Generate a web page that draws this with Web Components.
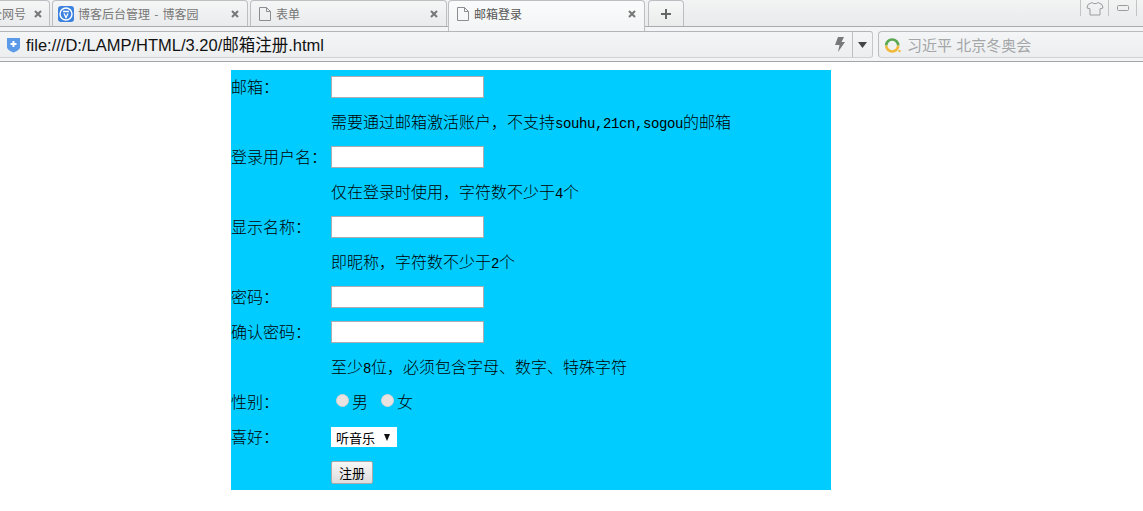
<!DOCTYPE html>
<html lang="zh">
<head>
<meta charset="utf-8">
<title>邮箱登录</title>
<style>
  html, body { margin: 0; padding: 0; background: #fff; overflow: hidden; }
  body { font-family: "Noto Sans CJK SC", "Liberation Sans", sans-serif; }
</style>
</head>
<body>

<browser-chrome>
  <browser-tab slot="tabs" width="69" first>全网号</browser-tab>
  <browser-tab slot="tabs" width="196" icon="site">博客后台管理 - 博客园</browser-tab>
  <browser-tab slot="tabs" width="197" icon="page">表单</browser-tab>
  <browser-tab slot="tabs" width="197" icon="page" active>邮箱登录</browser-tab>
</browser-chrome>

<register-form>
  <form-row label="邮箱："><text-box></text-box></form-row>
  <form-row>需要通过邮箱激活账户，不支持<latin-text>souhu,21cn,sogou</latin-text>的邮箱</form-row>
  <form-row label="登录用户名："><text-box></text-box></form-row>
  <form-row>仅在登录时使用，字符数不少于<latin-text>4</latin-text>个</form-row>
  <form-row label="显示名称："><text-box></text-box></form-row>
  <form-row>即昵称，字符数不少于<latin-text>2</latin-text>个</form-row>
  <form-row label="密码："><text-box></text-box></form-row>
  <form-row label="确认密码："><text-box></text-box></form-row>
  <form-row>至少<latin-text>8</latin-text>位，必须包含字母、数字、特殊字符</form-row>
  <form-row label="性别："><radio-option>男</radio-option><radio-option>女</radio-option></form-row>
  <form-row label="喜好："><choice-box>听音乐</choice-box></form-row>
  <form-row><submit-button>注册</submit-button></form-row>
</register-form>

<script>
// small helper, every element below just sets its shadow html once
class BaseElement extends HTMLElement {
  connectedCallback() {
    if (!this.shadowRoot) {
      this.attachShadow({ mode: 'open' });
      this.shadowRoot.innerHTML = this.render();
    }
  }
}

class BrowserChrome extends BaseElement {
  render() {
    return `
      <style>
        :host { display: block; height: 62px; box-sizing: border-box; border-bottom: 1px solid #a4a7aa;
                background: #f3f4f5; font-family: "Noto Sans CJK SC", "Liberation Sans", sans-serif; }
        .strip { height: 27px; box-sizing: border-box; border-bottom: 1px solid #a9acaf; display: flex;
                 background: linear-gradient(#f2f3f3, #e9ebec); }
        .tabs { display: flex; width: 645px; gap: 2px; flex: none; }
        .plus { width: 36px; height: 26px; margin-left: 3px; box-sizing: border-box; flex: none;
                border: 1px solid #bcbfc2; border-bottom: 0; border-radius: 4px 4px 0 0;
                background: linear-gradient(#f6f7f7, #eaecec); display: flex; align-items: center; justify-content: center; }
        .sys { margin-left: auto; display: flex; height: 16px; }
        .sys div { width: 27px; border-left: 1px solid #c2c4c6; display: flex; align-items: center; justify-content: center; }
        .sys div:last-child { width: 6px; }
        .bar { height: 34px; box-sizing: border-box; padding-top: 4px; display: flex; }
        .addr { width: 873px; height: 27px; box-sizing: border-box; border-top: 1px solid #b3b6b9; border-bottom: 1px solid #cfd1d3;
                border-right: 1px solid #c4c6c8; border-radius: 0 3px 3px 0; background: linear-gradient(#f4f5f6, #eceef0);
                display: flex; align-items: center; padding-left: 6px; font: 16.5px/24px "Liberation Sans", "Noto Sans CJK SC", sans-serif; color: #111; }
        .addr .url { margin-left: 5px; flex: 1; white-space: nowrap; }
        .addr .bolt { margin-right: 7px; display: flex; }
        .addr .drop { width: 19px; height: 25px; border-left: 1px solid #bdbfc1; display: flex; align-items: center; justify-content: center; }
        .search { margin-left: 5px; flex: 1; height: 27px; box-sizing: border-box; border: 1px solid #b9bcbf; border-right: 0;
                  border-bottom-color: #cfd1d3; border-radius: 4px 0 0 4px; background: linear-gradient(#f4f5f6, #eceef0);
                  display: flex; align-items: center; padding-left: 5px; color: #a4a6a8; font-size: 15px; word-spacing: 1px; white-space: nowrap; }
        .search span { margin-left: 6px; }
      </style>
      <div class="strip">
        <div class="tabs"><slot name="tabs"></slot></div>
        <div class="plus">
          <svg width="12" height="12" viewBox="0 0 12 12"><path d="M6 1v10M1 6h10" stroke="#666" stroke-width="2"/></svg>
        </div>
        <div class="sys">
          <div>
            <svg width="18" height="15" viewBox="0 0 18 15" fill="none" stroke="#9a9c9e" stroke-width="1"><path d="M6 1.500 2 3.500 1 7l3 .8V14h10V7.800L17 7l-1-3.500-4-2c-.8 1.500-5.200 1.500-6 0Z"/></svg>
          </div>
          <div>
            <svg width="12" height="6" viewBox="0 0 12 6"><rect x=".5" y=".5" width="11" height="5" rx="1" fill="none" stroke="#9a9c9e"/></svg>
          </div>
          <div></div>
        </div>
      </div>
      <div class="bar">
        <div class="addr">
          <svg width="15" height="16" viewBox="0 0 15 16"><path d="M1 1h13v9c0 2.500-3.500 4.500-6.500 5.500C4.500 14.500 1 12.500 1 10Z" fill="#5a9ae8"/><path d="M7.500 4v6M4.500 7h6" stroke="#fff" stroke-width="2"/></svg>
          <span class="url">file:///D:/LAMP/HTML/3.20/邮箱注册.html</span>
          <span class="bolt"><svg width="10" height="15" viewBox="0 0 10 15"><path d="M3 0h6L6.500 5H10L3 15l1.500-7H0Z" fill="#77797b"/></svg></span>
          <span class="drop"><svg width="9" height="6" viewBox="0 0 9 6"><path d="M0 0h9L4.500 6Z" fill="#444"/></svg></span>
        </div>
        <div class="search">
          <svg width="17" height="17" viewBox="0 0 17 17" fill="none" stroke-width="2.600">
            <path d="M2.200 9.500A6 6 0 0 1 14.200 9.500" stroke="#5aa84f"/>
            <path d="M14.200 9.500A6 6 0 0 1 2.200 9.500" stroke="#f0b93a"/>
            <circle cx="15.500" cy="15" r="1.200" fill="#f0b93a" stroke="none"/>
          </svg>
          <span>习近平 北京冬奥会</span>
        </div>
      </div>`;
  }
}

class BrowserTab extends BaseElement {
  render() {
    const width = this.getAttribute('width');
    const icon = this.getAttribute('icon');
    const active = this.hasAttribute('active');
    const first = this.hasAttribute('first');
    let glyph = '';
    if (icon === 'site') {
      glyph = `<svg width="16" height="16" viewBox="0 0 16 16"><rect width="16" height="16" rx="3" fill="#3c82de"/><circle cx="8" cy="8" r="6" fill="none" stroke="#fff" stroke-width="1.400"/><path d="M5 5.500h6M6 7.500 8 11.500 10 7.500" fill="none" stroke="#fff" stroke-width="1.300"/></svg>`;
    } else if (icon === 'page') {
      glyph = `<svg width="12" height="14" viewBox="0 0 12 14" fill="none" stroke="#8b8d8f"><path d="M.5.500h7l4 4v9H.5ZM7.500.500v4h4"/></svg>`;
    }
    // the first tab is scrolled partly out of the strip, the active one sits over the next bar
    return `
      <style>
        :host { display: block; flex: none; width: ${width}px; height: ${active ? 31 : 26}px; box-sizing: border-box;
                position: relative; z-index: ${active ? 1 : 0};
                margin-left: ${first ? -19 : active ? -1 : 0}px;
                border: 1px solid #bcbfc2; border-bottom: 0; border-radius: 4px 4px 0 0;
                background: ${active ? 'linear-gradient(#fafbfb, #f3f4f5)' : 'linear-gradient(#f5f6f6, #e9ebec)'};
                font-size: 12px; word-spacing: 1.500px; color: ${active ? '#555' : '#777'}; }
        .in { height: 25px; display: flex; align-items: center; padding: 0 8px 0 ${icon === 'site' ? 5 : 8}px;
              justify-content: space-between; overflow: hidden; white-space: nowrap; }
        .lbl { display: flex; align-items: center; gap: ${icon === 'site' ? 4 : 5}px; }
        .x { flex: none; display: flex; margin-left: 8px; }
      </style>
      <div class="in">
        <span class="lbl">${glyph}<slot></slot></span>
        <span class="x"><svg width="8" height="8" viewBox="0 0 8 8"><path d="m1 1 6 6M7 1 1 7" stroke="#777" stroke-width="2"/></svg></span>
      </div>`;
  }
}

class RegisterForm extends BaseElement {
  render() {
    return `
      <style>
        :host { display: block; width: 600px; margin: 8px 0 0 231px; background: #00ccff; color: #000;
                font: 300 16px "Noto Sans CJK SC", "Liberation Serif", serif; }
      </style>
      <slot></slot>`;
  }
}

class FormRow extends BaseElement {
  render() {
    return `
      <style>
        :host { display: grid; grid-template-columns: 100px 500px; height: 35px; box-sizing: border-box; padding-bottom: 4px;
                align-items: center; white-space: nowrap; }
        .cell { display: flex; align-items: center; }
        .cell span { display: flex; align-items: baseline; }
      </style>
      <div>${this.getAttribute('label') || ''}</div>
      <div class="cell"><span><slot></slot></span></div>`;
  }
}

class LatinText extends BaseElement {
  render() {
    return `<style>:host { font: 14px "Liberation Mono", monospace; letter-spacing: -.4px; }</style><slot></slot>`;
  }
}

class TextBox extends BaseElement {
  render() {
    return `
      <style>
        :host { display: block; margin-top: 3px; }
        input { display: block; width: 153px; height: 22px; box-sizing: border-box; margin: 0; background: #fff;
                border: 1px solid #abadb3; border-radius: 0; padding: 1px; }
      </style>
      <input type="text">`;
  }
}

class RadioOption extends BaseElement {
  render() {
    return `
      <style>
        :host { display: inline-flex; align-items: center; margin-right: 8px; margin-top: 1px; }
        input { appearance: none; width: 13px; height: 13px; margin: 2px 3px 4px 5px; border-radius: 50%;
                border: 1px solid #d6d4d4; box-sizing: border-box; background: #e8e2e0; }
      </style>
      <input type="radio" name="sex"><slot></slot>`;
  }
}

class ChoiceBox extends BaseElement {
  render() {
    return `
      <style>
        :host { display: block; position: relative; width: 66px; height: 20px; margin-top: 3px; }
        select { appearance: none; display: block; width: 66px; height: 20px; box-sizing: border-box; border: 0; margin: 0; padding: 0 0 0 5px;
                 background: #fff; color: #000; font: 13px "Noto Sans CJK SC", sans-serif; border-radius: 0; }
        .arrow { position: absolute; left: 53px; top: 7px; width: 0; height: 0; border-style: solid;
                 border-width: 7px 3.500px 0; border-color: #111 transparent transparent; }
      </style>
      <select><option>${this.textContent.trim()}</option></select>
      <div class="arrow"></div>`;
  }
}

class SubmitButton extends BaseElement {
  render() {
    return `
      <style>
        :host { display: block; margin-top: 4px; }
        button { display: block; width: 42px; height: 23px; box-sizing: border-box; margin: 0; padding: 0; border: 1px solid #a9a9a9;
                 border-radius: 2px; background: linear-gradient(#f7f7f7, #dddddd); color: #000;
                 font: 13px "Noto Sans CJK SC", sans-serif; }
      </style>
      <button type="submit"><slot></slot></button>`;
  }
}

customElements.define('browser-chrome', BrowserChrome);
customElements.define('browser-tab', BrowserTab);
customElements.define('register-form', RegisterForm);
customElements.define('form-row', FormRow);
customElements.define('latin-text', LatinText);
customElements.define('text-box', TextBox);
customElements.define('radio-option', RadioOption);
customElements.define('choice-box', ChoiceBox);
customElements.define('submit-button', SubmitButton);
</script>
</body>
</html>
